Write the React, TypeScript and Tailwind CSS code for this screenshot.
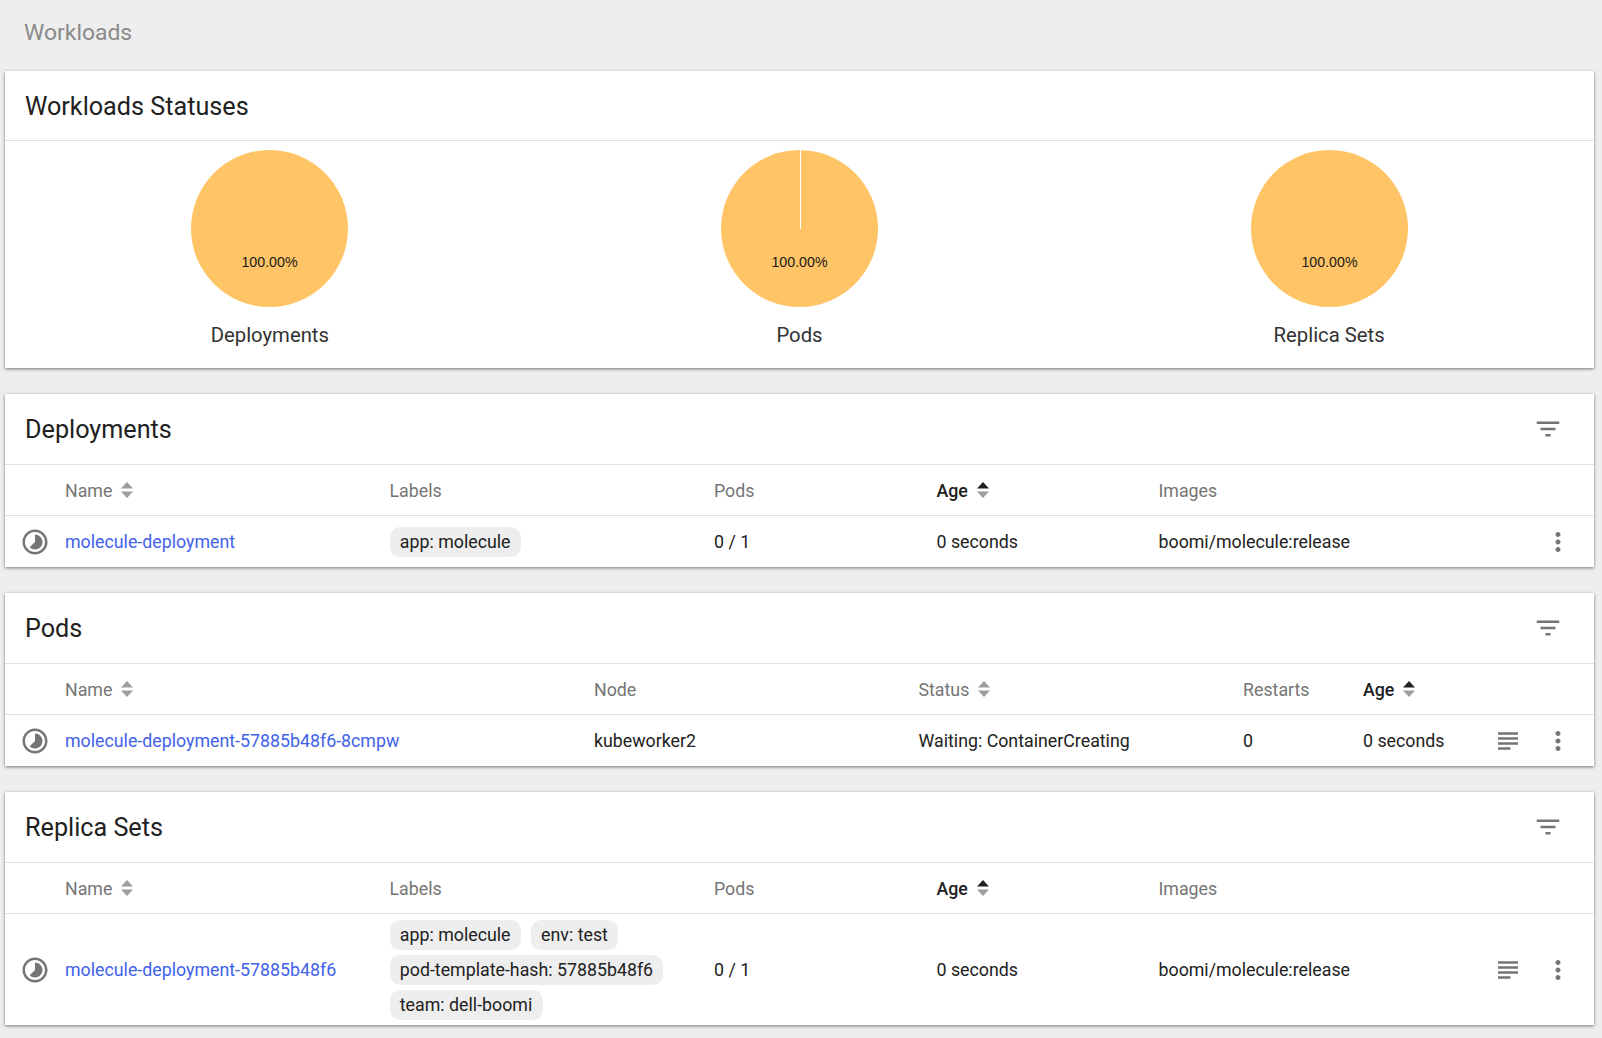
import React from 'react';

const Timelapse = () => (
  <svg viewBox="0 0 24 24" className="w-[30px] h-[30px] fill-[#757575]">
    <path d="M16.24 7.76C15.07 6.59 13.54 6 12 6v6l-4.24 4.24c2.34 2.34 6.14 2.34 8.49 0 2.34-2.34 2.34-6.14-.01-8.48zM12 2C6.48 2 2 6.48 2 12s4.48 10 10 10 10-4.48 10-10S17.52 2 12 2zm0 18c-4.42 0-8-3.58-8-8s3.58-8 8-8 8 3.58 8 8-3.58 8-8 8z" />
  </svg>
);

const FilterIcon = () => (
  <svg viewBox="0 0 24 24" className="w-[30px] h-[30px] -mt-[2px] fill-[#757575]">
    <path d="M10 18h4v-2h-4v2zM3 6v2h18V6H3zm3 7h12v-2H6v2z" />
  </svg>
);

const LogsIcon = () => (
  <svg viewBox="0 0 24 24" className="w-[30px] h-[30px] fill-[#757575]">
    <path d="M14 17H4v2h10v-2zm6-8H4v2h16V9zM4 15h16v-2H4v2zM4 5v2h16V5H4z" />
  </svg>
);

const MoreIcon = () => (
  <svg viewBox="0 0 24 24" className="w-[30px] h-[30px] fill-[#757575]">
    <path d="M12 8c1.1 0 2-.9 2-2s-.9-2-2-2-2 .9-2 2 .9 2 2 2zm0 2c-1.1 0-2 .9-2 2s.9 2 2 2 2-.9 2-2-.9-2-2-2zm0 6c-1.1 0-2 .9-2 2s.9 2 2 2 2-.9 2-2-.9-2-2-2z" />
  </svg>
);

const SortArrows = ({ active }: { active?: boolean }) => (
  <svg viewBox="0 0 14 18" className="w-[14px] h-[18px] ml-[8px]">
    <path d="M7 1 L13 7.5 L1 7.5 Z" className={active ? 'fill-[#212121]' : 'fill-[#9e9e9e]'} />
    <path d="M1 10.5 L13 10.5 L7 17 Z" className="fill-[#9e9e9e]" />
  </svg>
);

const Pie = ({ label, split }: { label: string; split?: boolean }) => (
  <div className="flex flex-col items-center">
    <svg viewBox="0 0 156 156" className="w-[157px] h-[157px]">
      <circle cx="78" cy="78" r="78" className="fill-[#ffc466]" />
      {split && <rect x="78" y="0" width="1" height="78" shapeRendering="crispEdges" className="fill-white" />}
      <text x="78" y="116.5" textAnchor="middle" className="fill-[#1a1a1a] text-[14.1px] font-['Liberation_Sans',Arial,sans-serif]">100.00%</text>
    </svg>
    <div className="mt-[14.5px] text-[20.3px] leading-[26px] text-[#333333]">{label}</div>
  </div>
);

const Card = ({ title, filter, children }: { title: string; filter?: boolean; children: React.ReactNode }) => (
  <section className="bg-white ml-[5px] mr-[8px] shadow-[0_1px_3px_rgba(0,0,0,0.5)]">
    <div className={`flex items-center justify-between pt-[2px] pl-[20px] pr-[31px] border-b border-[#e0e0e0] ${filter ? 'h-[71px]' : 'h-[70px]'}`}>
      <h2 className="text-[25.2px] text-[#212121] font-normal">{title}</h2>
      {filter && <FilterIcon />}
    </div>
    {children}
  </section>
);

const Chip = ({ text }: { text: string }) => (
  <span className="inline-block h-[30px] leading-[30px] px-[10.3px] rounded-[10px] bg-[#eeeeee] text-[17.8px] text-[#212121] whitespace-nowrap">{text}</span>
);

const Head = ({ children, sort, active }: { children: string; sort?: boolean; active?: boolean }) => (
  <div className={`flex items-center text-[17.8px] ${active ? 'text-[#212121] font-medium' : 'text-[#757575]'}`}>
    <span className="pt-[2px]">{children}</span>
    {sort && <SortArrows active={active} />}
  </div>
);

const Link = ({ children }: { children: string }) => (
  <a className="pt-[2px] text-[17.8px] text-[#3f62e8] whitespace-nowrap">{children}</a>
);

const Cell = ({ children }: { children: React.ReactNode }) => (
  <div className="pt-[2px] text-[17.8px] text-[#212121] whitespace-nowrap">{children}</div>
);

const wideCols = 'grid grid-cols-[60px_324.5px_324.5px_222.5px_222px_1fr_50px_51px] items-center';
const podCols = 'grid grid-cols-[60px_529px_324.5px_324.5px_120px_1fr_50px_51px] items-center';

const App: React.FC = () => {
  return (
    <div className="min-h-[1038px] bg-[#eeeeee] font-['Roboto',sans-serif]">
      <div className="h-[71px] pl-[24px] pt-[17px] text-[22.9px] leading-[32px] text-[#8a8a8a]">Workloads</div>

      <Card title="Workloads Statuses">
        <div className="grid grid-cols-3 h-[227px] pt-[9px]">
          <Pie label="Deployments" />
          <Pie label="Pods" split />
          <Pie label="Replica Sets" />
        </div>
      </Card>

      <div className="mt-[26px]">
        <Card title="Deployments" filter>
          <div className={`${wideCols} h-[51px] border-b border-[#e0e0e0]`}>
            <div />
            <Head sort>Name</Head>
            <Head>Labels</Head>
            <Head>Pods</Head>
            <Head sort active>Age</Head>
            <Head>Images</Head>
          </div>
          <div className={`${wideCols} h-[51px]`}>
            <div className="pl-[15px]"><Timelapse /></div>
            <Link>molecule-deployment</Link>
            <div><Chip text="app: molecule" /></div>
            <Cell>0 / 1</Cell>
            <Cell>0 seconds</Cell>
            <Cell>boomi/molecule:release</Cell>
            <div />
            <div><MoreIcon /></div>
          </div>
        </Card>
      </div>

      <div className="mt-[26px]">
        <Card title="Pods" filter>
          <div className={`${podCols} h-[51px] border-b border-[#e0e0e0]`}>
            <div />
            <Head sort>Name</Head>
            <Head>Node</Head>
            <Head sort>Status</Head>
            <Head>Restarts</Head>
            <Head sort active>Age</Head>
          </div>
          <div className={`${podCols} h-[51px]`}>
            <div className="pl-[15px]"><Timelapse /></div>
            <Link>molecule-deployment-57885b48f6-8cmpw</Link>
            <Cell>kubeworker2</Cell>
            <Cell>Waiting: ContainerCreating</Cell>
            <Cell>0</Cell>
            <Cell>0 seconds</Cell>
            <div><LogsIcon /></div>
            <div><MoreIcon /></div>
          </div>
        </Card>
      </div>

      <div className="mt-[26px]">
        <Card title="Replica Sets" filter>
          <div className={`${wideCols} h-[51px] border-b border-[#e0e0e0]`}>
            <div />
            <Head sort>Name</Head>
            <Head>Labels</Head>
            <Head>Pods</Head>
            <Head sort active>Age</Head>
            <Head>Images</Head>
          </div>
          <div className={`${wideCols} h-[111px]`}>
            <div className="pl-[15px]"><Timelapse /></div>
            <Link>molecule-deployment-57885b48f6</Link>
            <div className="flex flex-wrap gap-x-[10px] gap-y-[5px]">
              <Chip text="app: molecule" />
              <Chip text="env: test" />
              <Chip text="pod-template-hash: 57885b48f6" />
              <Chip text="team: dell-boomi" />
            </div>
            <Cell>0 / 1</Cell>
            <Cell>0 seconds</Cell>
            <Cell>boomi/molecule:release</Cell>
            <div><LogsIcon /></div>
            <div><MoreIcon /></div>
          </div>
        </Card>
      </div>
    </div>
  );
};

export default App;
